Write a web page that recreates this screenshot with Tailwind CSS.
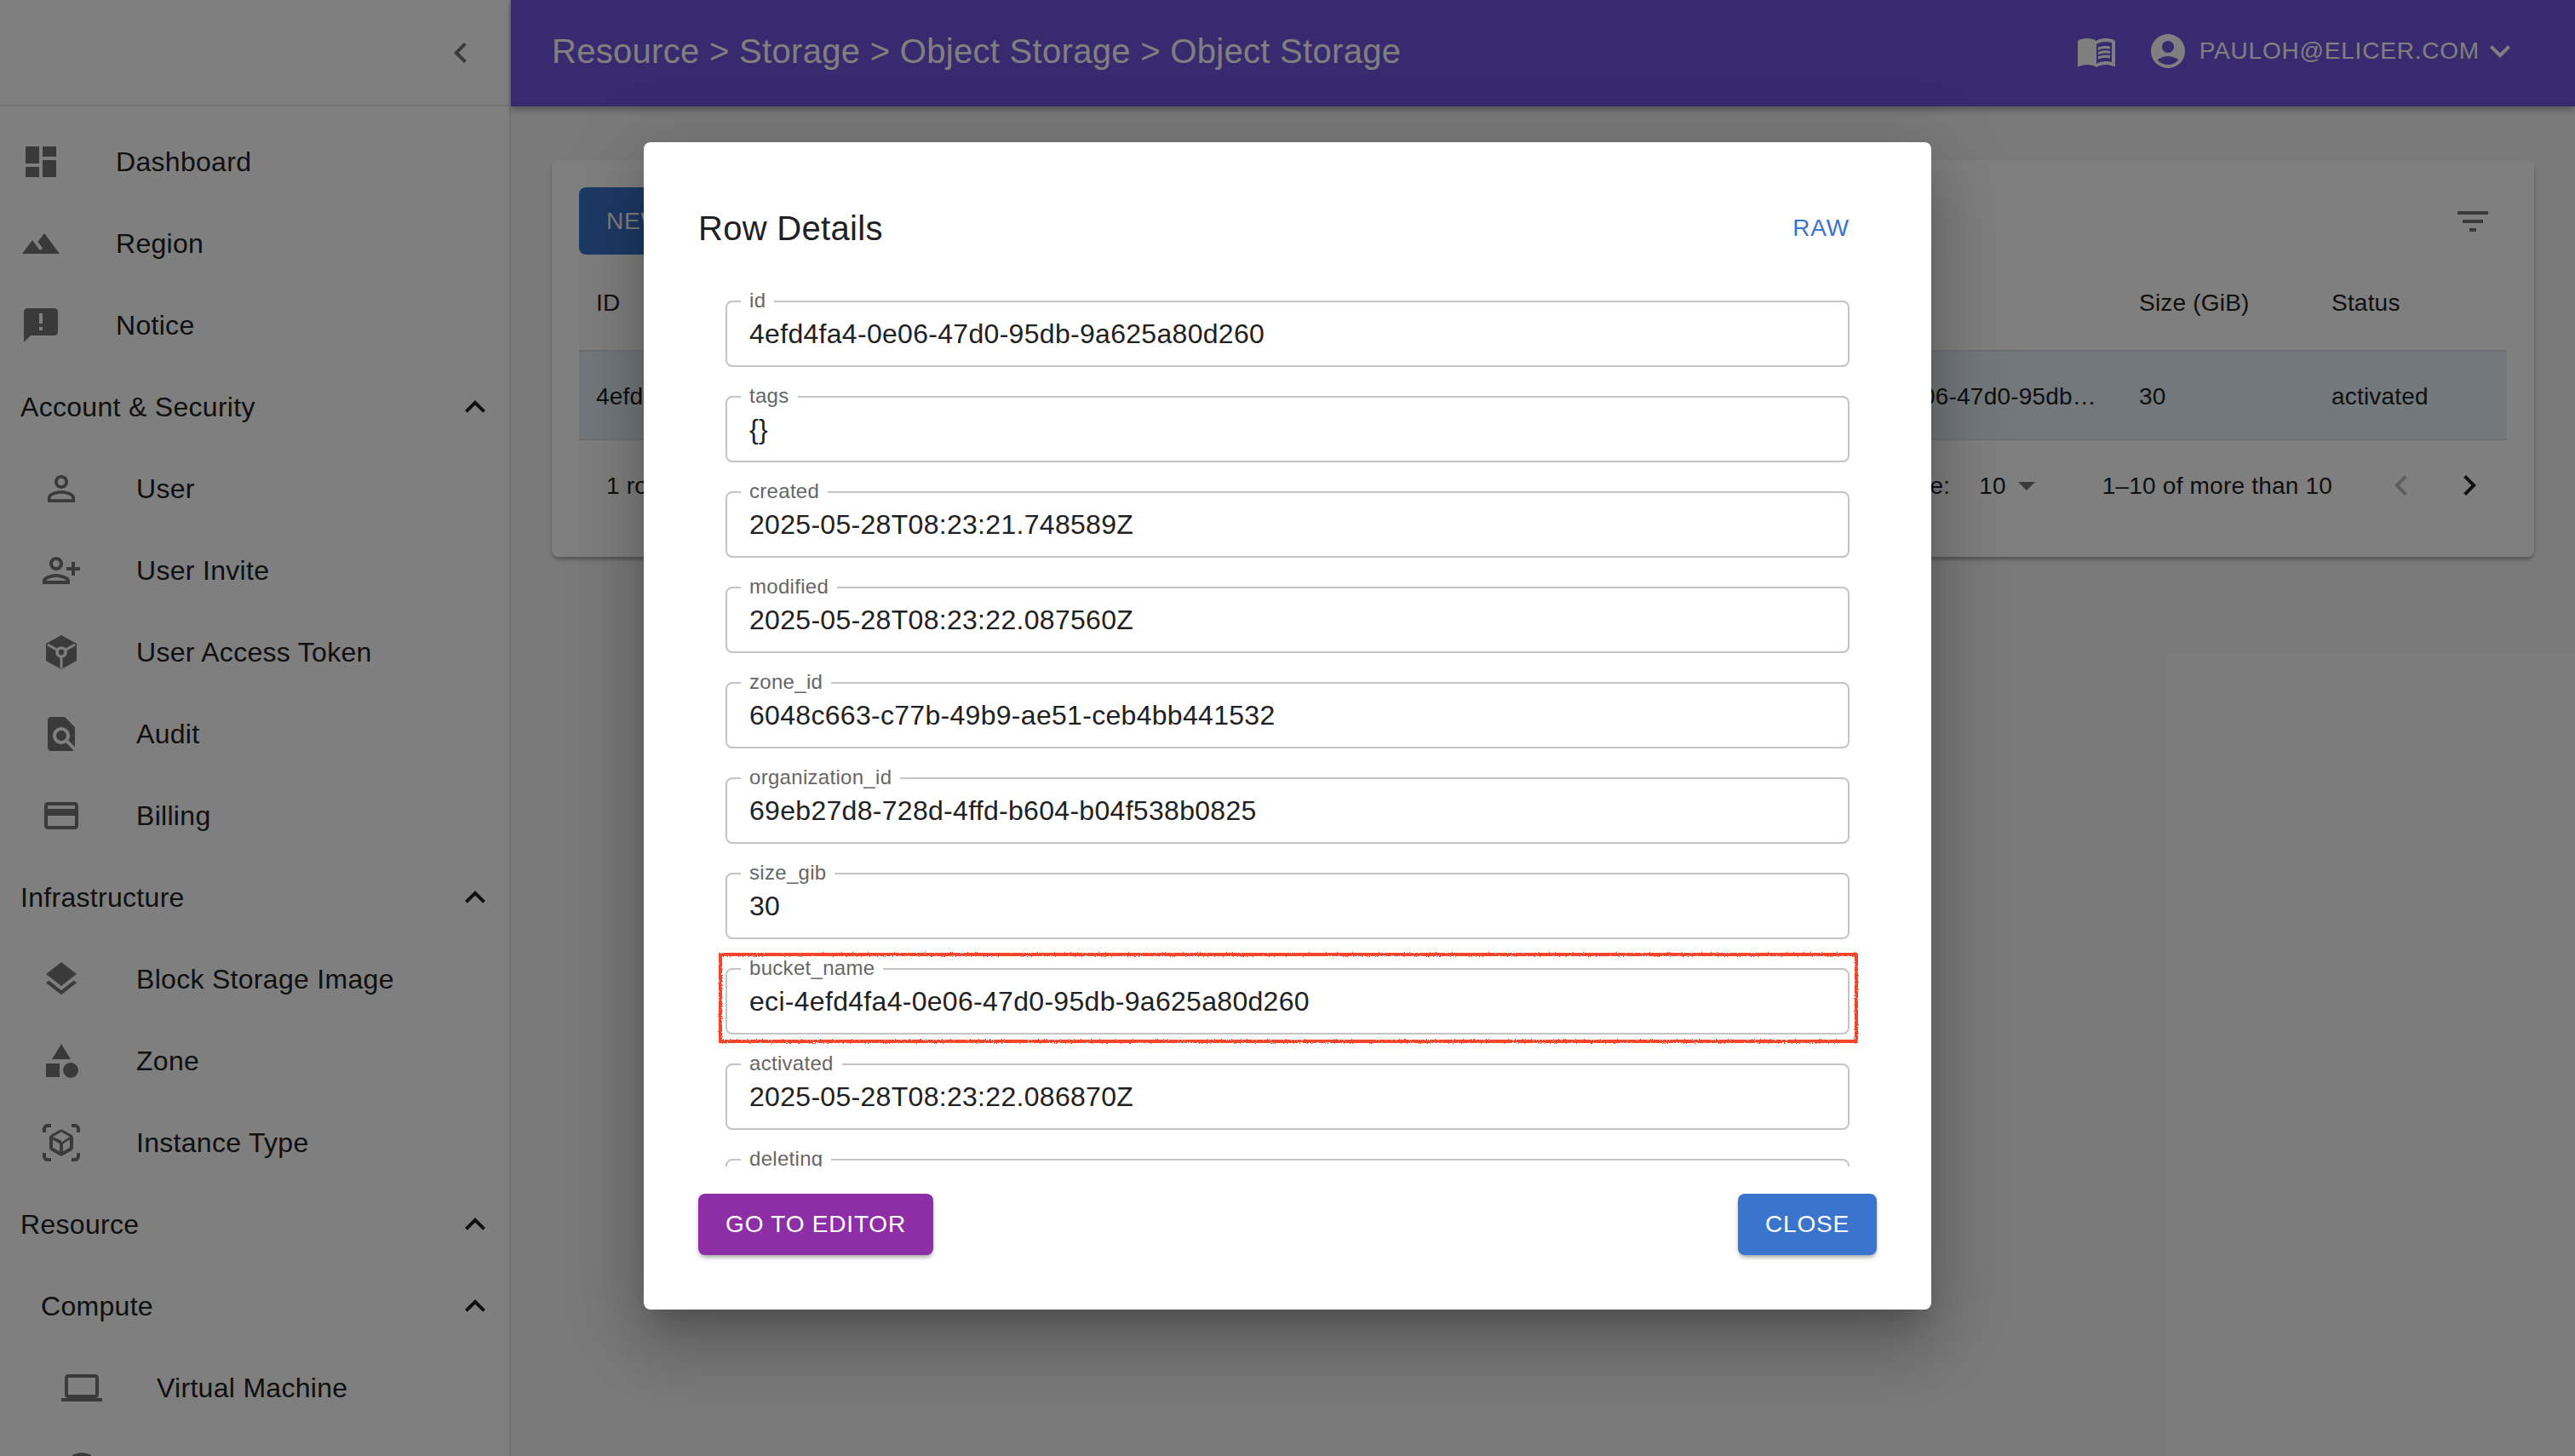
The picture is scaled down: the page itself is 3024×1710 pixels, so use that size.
<!DOCTYPE html>
<html lang="en">
<head>
    <meta charset="UTF-8">
    <title>Object Storage</title>
    <script src="https://cdn.jsdelivr.net/npm/@tailwindcss/browser@4"></script>
</head>
<body class="font-['Liberation_Sans',Arial,sans-serif] text-[#212121] tracking-[0.3px] overflow-hidden">
    <svg class="absolute w-0 h-0">
        <filter id="rough"><feTurbulence type="fractalNoise" baseFrequency="0.9" numOctaves="2" /><feDisplacementMap in="SourceGraphic" scale="3" /></filter>
    </svg>

    <div class="relative flex w-[3024px] h-[1710px] overflow-hidden bg-[#f5f5f5]">
        <!-- sidebar -->
        <aside class="w-[600px] shrink-0 h-full bg-white border-r-2 border-black/10 text-[32px] overflow-hidden">
            <div class="h-[125px] flex items-center justify-end pr-[33px] border-b-2 border-black/10">
                <svg class="w-12 h-12 fill-[#757575]" viewBox="0 0 24 24"><path d="M15.41 7.41L14 6l-6 6 6 6 1.41-1.41L10.83 12z"/></svg>
            </div>
            <nav class="pt-[17px]">
                <a class="h-[96px] flex items-center pl-6"><span class="w-[112px] shrink-0"><svg class="w-12 h-12 fill-[#757575]" viewBox="0 0 24 24"><path d="M3 13h8V3H3v10zm0 8h8v-6H3v6zm10 0h8V11h-8v10zm0-18v6h8V3h-8z"/></svg></span>Dashboard</a>
                <a class="h-[96px] flex items-center pl-6"><span class="w-[112px] shrink-0"><svg class="w-12 h-12 fill-[#757575]" viewBox="0 0 24 24"><path d="M14 6l-3.75 5 2.85 3.8-1.6 1.2C9.81 13.75 7 10 7 10l-6 8h22L14 6z"/></svg></span>Region</a>
                <a class="h-[96px] flex items-center pl-6"><span class="w-[112px] shrink-0"><svg class="w-12 h-12 fill-[#757575]" viewBox="0 0 24 24"><path d="M20 2H4c-1.1 0-1.99.9-1.99 2L2 22l4-4h14c1.1 0 2-.9 2-2V4c0-1.1-.9-2-2-2zm-7 9h-2V5h2v6zm0 4h-2v-2h2v2z"/></svg></span>Notice</a>

                <div class="h-[96px] flex items-center justify-between pl-6 pr-4">Account &amp; Security<svg class="w-12 h-12 fill-[#212121]" viewBox="0 0 24 24"><path d="M12 8l-6 6 1.41 1.41L12 10.83l4.59 4.58L18 14z"/></svg></div>
                <a class="h-[96px] flex items-center pl-12"><span class="w-[112px] shrink-0"><svg class="w-12 h-12 fill-[#757575]" viewBox="0 0 24 24"><path d="M12 5.9c1.16 0 2.1.94 2.1 2.1s-.94 2.1-2.1 2.1S9.9 9.16 9.9 8s.94-2.1 2.1-2.1m0 9c2.97 0 6.1 1.46 6.1 2.1v1.1H5.9V17c0-.64 3.13-2.1 6.1-2.1M12 4C9.79 4 8 5.79 8 8s1.79 4 4 4 4-1.79 4-4-1.79-4-4-4zm0 9c-2.67 0-8 1.34-8 4v3h16v-3c0-2.66-5.33-4-8-4z"/></svg></span>User</a>
                <a class="h-[96px] flex items-center pl-12"><span class="w-[112px] shrink-0"><svg class="w-12 h-12 fill-[#757575] -scale-x-100" viewBox="0 0 24 24"><path d="M15 12c2.21 0 4-1.79 4-4s-1.79-4-4-4-4 1.79-4 4 1.79 4 4 4zm0-6c1.1 0 2 .9 2 2s-.9 2-2 2-2-.9-2-2 .9-2 2-2zm0 8c-2.67 0-8 1.34-8 4v2h16v-2c0-2.66-5.33-4-8-4zm-6 4c.22-.72 3.31-2 6-2 2.7 0 5.8 1.29 6 2H9zm-3-3v-3h3v-2H6V7H4v3H1v2h3v3h2z"/></svg></span>User Invite</a>
                <a class="h-[96px] flex items-center pl-12"><span class="w-[112px] shrink-0"><svg class="w-12 h-12 fill-[#757575]" viewBox="0 0 24 24"><path d="M21 7l-9-5-9 5v10l9 5 9-5z"/><path d="M4 7.5l8 4.5 8-4.5M12 12v9.5" fill="none" stroke="#fff" stroke-width="1.5"/><circle cx="12" cy="12" r="3.4" fill="#fff"/><circle cx="12" cy="12" r="1.6"/></svg></span>User Access Token</a>
                <a class="h-[96px] flex items-center pl-12"><span class="w-[112px] shrink-0"><svg class="w-12 h-12 fill-[#757575]" viewBox="0 0 24 24"><path d="M20 19.59V8l-6-6H6c-1.1 0-1.99.9-1.99 2L4 20c0 1.1.89 2 1.99 2H18c.45 0 .85-.15 1.19-.4l-4.43-4.43c-.8.52-1.74.83-2.76.83-2.76 0-5-2.24-5-5s2.24-5 5-5 5 2.24 5 5c0 1.02-.31 1.96-.83 2.75L20 19.59zM9 13c0 1.66 1.34 3 3 3s3-1.34 3-3-1.34-3-3-3-3 1.34-3 3z"/></svg></span>Audit</a>
                <a class="h-[96px] flex items-center pl-12"><span class="w-[112px] shrink-0"><svg class="w-12 h-12 fill-[#757575]" viewBox="0 0 24 24"><path d="M20 4H4c-1.11 0-1.99.89-1.99 2L2 18c0 1.11.89 2 2 2h16c1.11 0 2-.89 2-2V6c0-1.11-.89-2-2-2zm0 14H4v-6h16v6zm0-10H4V6h16v2z"/></svg></span>Billing</a>

                <div class="h-[96px] flex items-center justify-between pl-6 pr-4">Infrastructure<svg class="w-12 h-12 fill-[#212121]" viewBox="0 0 24 24"><path d="M12 8l-6 6 1.41 1.41L12 10.83l4.59 4.58L18 14z"/></svg></div>
                <a class="h-[96px] flex items-center pl-12"><span class="w-[112px] shrink-0"><svg class="w-12 h-12 fill-[#757575]" viewBox="0 0 24 24"><path d="M11.99 18.54l-7.37-5.73L3 14.07l9 7 9-7-1.63-1.27-7.38 5.74zM12 16l7.36-5.73L21 9l-9-7-9 7 1.63 1.27L12 16z"/></svg></span>Block Storage Image</a>
                <a class="h-[96px] flex items-center pl-12"><span class="w-[112px] shrink-0"><svg class="w-12 h-12 fill-[#757575]" viewBox="0 0 24 24"><path d="M12 2l-5.5 9h11z"/><circle cx="17.5" cy="17.5" r="4.5"/><path d="M3 13.5h8v8H3z"/></svg></span>Zone</a>
                <a class="h-[96px] flex items-center pl-12"><span class="w-[112px] shrink-0"><svg class="w-12 h-12 fill-[#757575]" viewBox="0 0 24 24"><path d="M3 4c0-.55.45-1 1-1h2V1H4C2.34 1 1 2.34 1 4v2h2V4zm0 16v-2H1v2c0 1.66 1.34 3 3 3h2v-2H4c-.55 0-1-.45-1-1zM20 1h-2v2h2c.55 0 1 .45 1 1v2h2V4c0-1.66-1.34-3-3-3zm1 19c0 .55-.45 1-1 1h-2v2h2c1.66 0 3-1.34 3-3v-2h-2v2zm-2-5.13V9.13c0-.72-.38-1.38-1-1.73l-5-2.88c-.31-.18-.65-.27-1-.27s-.69.09-1 .27L6 7.39c-.62.36-1 1.02-1 1.74v5.74c0 .72.38 1.38 1 1.73l5 2.88c.31.18.65.27 1 .27s.69-.09 1-.27l5-2.88c.62-.35 1-1.01 1-1.73zm-8 2.3l-4-2.3v-4.63l4 2.33v4.6zm1-6.33L7.04 8.53 12 5.69l4.96 2.84L12 11.84zm5 4.03l-4 2.3v-4.6l4-2.33v4.63z"/></svg></span>Instance Type</a>

                <div class="h-[96px] flex items-center justify-between pl-6 pr-4">Resource<svg class="w-12 h-12 fill-[#212121]" viewBox="0 0 24 24"><path d="M12 8l-6 6 1.41 1.41L12 10.83l4.59 4.58L18 14z"/></svg></div>
                <div class="h-[96px] flex items-center justify-between pl-12 pr-4">Compute<svg class="w-12 h-12 fill-[#212121]" viewBox="0 0 24 24"><path d="M12 8l-6 6 1.41 1.41L12 10.83l4.59 4.58L18 14z"/></svg></div>
                <a class="h-[96px] flex items-center pl-[72px]"><span class="w-[112px] shrink-0"><svg class="w-12 h-12 fill-[#757575]" viewBox="0 0 24 24"><path d="M20 18c1.1 0 1.99-.9 1.99-2L22 6c0-1.1-.9-2-2-2H4c-1.1 0-2 .9-2 2v10c0 1.1.9 2 2 2H0v2h24v-2h-4zM4 6h16v10H4V6z"/></svg></span>Virtual Machine</a>
                <a class="h-[96px] flex items-center pl-[72px]"><span class="w-[112px] shrink-0"><svg class="w-12 h-12 fill-[#757575]" viewBox="0 0 24 24"><circle cx="12" cy="12" r="10"/></svg></span></a>
            </nav>
        </aside>

        <div class="flex-1 min-w-0 flex flex-col">
            <!-- top bar -->
            <header class="h-[125px] shrink-0 bg-[#7054de] text-white flex items-center justify-between pl-12 pr-16 pb-[5px] shadow-[0_4px_8px_rgba(0,0,0,0.3)]">
                <div class="text-[40px]">Resource &gt; Storage &gt; Object Storage &gt; Object Storage</div>
                <div class="flex items-center text-[28px] tracking-[0.8px]">
                    <svg class="w-12 h-12 fill-white mr-9" viewBox="0 0 24 24"><path d="M21 5c-1.11-.35-2.33-.5-3.5-.5-1.95 0-4.05.4-5.5 1.5-1.45-1.1-3.55-1.5-5.5-1.5S2.45 4.9 1 6v14.65c0 .25.25.5.5.5.1 0 .15-.05.25-.05C3.1 20.45 5.05 20 6.5 20c1.95 0 4.05.4 5.5 1.5 1.35-.85 3.8-1.5 5.5-1.5 1.65 0 3.35.3 4.75 1.05.1.05.15.05.25.05.25 0 .5-.25.5-.5V6c-.6-.45-1.25-.75-2-1zm0 13.5c-1.1-.35-2.3-.5-3.5-.5-1.7 0-4.15.65-5.5 1.5V8c1.35-.85 3.8-1.5 5.5-1.5 1.2 0 2.4.15 3.5.5v11.5z"/><path d="M17.5 10.5c.88 0 1.73.09 2.5.26V9.24c-.79-.15-1.64-.24-2.5-.24-1.7 0-3.24.29-4.5.83v1.66c1.13-.64 2.7-.99 4.5-.99zM13 12.49v1.66c1.13-.64 2.7-.99 4.5-.99.88 0 1.73.09 2.5.26V11.9c-.79-.15-1.64-.24-2.5-.24-1.7 0-3.24.3-4.5.83zM17.5 14.33c-1.7 0-3.24.29-4.5.83v1.66c1.13-.64 2.7-.99 4.5-.99.88 0 1.73.09 2.5.26v-1.52c-.79-.16-1.64-.24-2.5-.24z"/></svg>
                    <svg class="w-12 h-12 fill-white mr-[13px]" viewBox="0 0 24 24"><path d="M12 2C6.48 2 2 6.48 2 12s4.48 10 10 10 10-4.48 10-10S17.52 2 12 2zm0 4c1.93 0 3.5 1.57 3.5 3.5S13.93 13 12 13s-3.5-1.57-3.5-3.5S10.07 6 12 6zm0 14c-2.03 0-4.43-.82-6.14-2.88C7.55 15.8 9.68 15 12 15s4.45.8 6.14 2.12C16.43 19.18 14.03 20 12 20z"/></svg>
                    <span>PAULOH@ELICER.COM</span>
                    <svg class="w-12 h-12 fill-white" viewBox="0 0 24 24"><path d="M16.59 8.59L12 13.17 7.41 8.59 6 10l6 6 6-6z"/></svg>
                </div>
            </header>

            <!-- table card -->
            <main class="flex-1 px-12 pt-[63px]">
                <div class="h-[466px] bg-white rounded-lg shadow-[0_4px_6px_-2px_rgba(0,0,0,0.3),0_2px_4px_rgba(0,0,0,0.14)] px-8 pt-8 text-[28px] tracking-[0.2px]">
                    <div class="h-[79px] flex items-center justify-between pr-4">
                        <button class="h-full w-[160px] rounded-lg bg-[#3a74cc] text-white text-left pl-8 tracking-[0.8px]">NEW</button>
                        <svg class="w-12 h-12 fill-[#757575]" viewBox="0 0 24 24"><path d="M10 18h4v-2h-4v2zM3 6v2h18V6H3zm3 7h12v-2H6v2z"/></svg>
                    </div>
                    <div class="h-[112px] flex items-center pl-5 pt-[1px]">
                        <div class="flex-1">ID</div>
                        <div class="w-[226px]">Size (GiB)</div>
                        <div class="w-[206px]">Status</div>
                    </div>
                    <div class="h-[106px] flex items-center pl-5 pt-[3px] bg-[#e6f1f8] border-y-2 border-[#e0e0e0]">
                        <div class="flex-1 flex justify-between pr-[50px]"><span>4efd4fa4-0e06-47d0</span><span>4efd4fa4-0e06-47d0-95db…</span></div>
                        <div class="w-[226px]">30</div>
                        <div class="w-[206px]">activated</div>
                    </div>
                    <div class="h-[106px] flex items-center justify-between pl-8 pr-5">
                        <span class="pt-[2px]">1 row selected</span>
                        <div class="flex items-center">
                            <span class="pt-[2px]">Rows per page:</span>
                            <span class="pt-[2px] ml-[34px]">10</span>
                            <svg class="w-12 h-12 fill-[#757575]" viewBox="0 0 24 24"><path d="M7 10l5 5 5-5z"/></svg>
                            <span class="pt-[2px] ml-[65px]">1–10 of more than 10</span>
                            <svg class="w-12 h-12 ml-[57px] fill-[#bdbdbd]" viewBox="0 0 24 24"><path d="M15.41 7.41L14 6l-6 6 6 6 1.41-1.41L10.83 12z"/></svg>
                            <svg class="w-12 h-12 ml-8 fill-[#212121]" viewBox="0 0 24 24"><path d="M10 6L8.59 7.41 13.17 12l-4.58 4.59L10 18l6-6z"/></svg>
                        </div>
                    </div>
                </div>
            </main>
        </div>

        <!-- backdrop and dialog -->
        <div class="absolute inset-0 bg-black/50 flex justify-center pt-[167px]">
            <div class="w-[1512px] h-[1371px] bg-white rounded-lg shadow-[0_22px_30px_-14px_rgba(0,0,0,0.2),0_48px_76px_6px_rgba(0,0,0,0.14),0_18px_92px_16px_rgba(0,0,0,0.12)] flex flex-col pt-16 px-16 pb-16">
                <div class="h-[74px] shrink-0 flex items-center justify-between pr-8">
                    <h2 class="text-[40px]">Row Details</h2>
                    <button class="text-[28px] tracking-[0.8px] text-[#3a74cc]">RAW</button>
                </div>
                <div class="mt-8 h-[1033px] shrink-0 overflow-hidden px-8 pt-4 flex flex-col gap-[34px]">
                    <div class="relative h-[78px] shrink-0 flex items-center pl-[26px] border-2 border-[#c4c4c4] rounded-lg text-[32px]"><span class="absolute left-[16px] -top-[16px] bg-white px-2.5 text-[24px] leading-[28px] text-[#666666]">id</span>4efd4fa4-0e06-47d0-95db-9a625a80d260</div>
                    <div class="relative h-[78px] shrink-0 flex items-center pl-[26px] border-2 border-[#c4c4c4] rounded-lg text-[32px]"><span class="absolute left-[16px] -top-[16px] bg-white px-2.5 text-[24px] leading-[28px] text-[#666666]">tags</span>{}</div>
                    <div class="relative h-[78px] shrink-0 flex items-center pl-[26px] border-2 border-[#c4c4c4] rounded-lg text-[32px]"><span class="absolute left-[16px] -top-[16px] bg-white px-2.5 text-[24px] leading-[28px] text-[#666666]">created</span>2025-05-28T08:23:21.748589Z</div>
                    <div class="relative h-[78px] shrink-0 flex items-center pl-[26px] border-2 border-[#c4c4c4] rounded-lg text-[32px]"><span class="absolute left-[16px] -top-[16px] bg-white px-2.5 text-[24px] leading-[28px] text-[#666666]">modified</span>2025-05-28T08:23:22.087560Z</div>
                    <div class="relative h-[78px] shrink-0 flex items-center pl-[26px] border-2 border-[#c4c4c4] rounded-lg text-[32px]"><span class="absolute left-[16px] -top-[16px] bg-white px-2.5 text-[24px] leading-[28px] text-[#666666]">zone_id</span>6048c663-c77b-49b9-ae51-ceb4bb441532</div>
                    <div class="relative h-[78px] shrink-0 flex items-center pl-[26px] border-2 border-[#c4c4c4] rounded-lg text-[32px]"><span class="absolute left-[16px] -top-[16px] bg-white px-2.5 text-[24px] leading-[28px] text-[#666666]">organization_id</span>69eb27d8-728d-4ffd-b604-b04f538b0825</div>
                    <div class="relative h-[78px] shrink-0 flex items-center pl-[26px] border-2 border-[#c4c4c4] rounded-lg text-[32px]"><span class="absolute left-[16px] -top-[16px] bg-white px-2.5 text-[24px] leading-[28px] text-[#666666]">size_gib</span>30</div>
                    <div class="relative h-[78px] shrink-0 flex items-center pl-[26px] border-2 border-[#c4c4c4] rounded-lg text-[32px]">
                        <span class="absolute left-[16px] -top-[16px] bg-white px-2.5 text-[24px] leading-[28px] text-[#666666]">bucket_name</span>eci-4efd4fa4-0e06-47d0-95db-9a625a80d260
                        <div class="absolute -left-[10px] -right-[12px] -top-[20px] -bottom-[12px] border-[4px] border-[#f2452b] [filter:url(#rough)]"></div>
                    </div>
                    <div class="relative h-[78px] shrink-0 flex items-center pl-[26px] border-2 border-[#c4c4c4] rounded-lg text-[32px]"><span class="absolute left-[16px] -top-[16px] bg-white px-2.5 text-[24px] leading-[28px] text-[#666666]">activated</span>2025-05-28T08:23:22.086870Z</div>
                    <div class="relative h-[78px] shrink-0 flex items-center pl-[26px] border-2 border-[#c4c4c4] rounded-lg text-[32px]"><span class="absolute left-[16px] -top-[16px] bg-white px-2.5 text-[24px] leading-[28px] text-[#666666]">deleting</span></div>
                </div>
                <div class="mt-8 flex justify-between text-[28px] tracking-[0.8px] text-white">
                    <button class="w-[276px] h-[72px] rounded-lg bg-[#8e2ea6] shadow-[0_4px_6px_-2px_rgba(0,0,0,0.3),0_2px_4px_rgba(0,0,0,0.14)]">GO TO EDITOR</button>
                    <button class="w-[163px] h-[72px] rounded-lg bg-[#3a74cc] shadow-[0_4px_6px_-2px_rgba(0,0,0,0.3),0_2px_4px_rgba(0,0,0,0.14)]">CLOSE</button>
                </div>
            </div>
        </div>
    </div>
</body>
</html>
